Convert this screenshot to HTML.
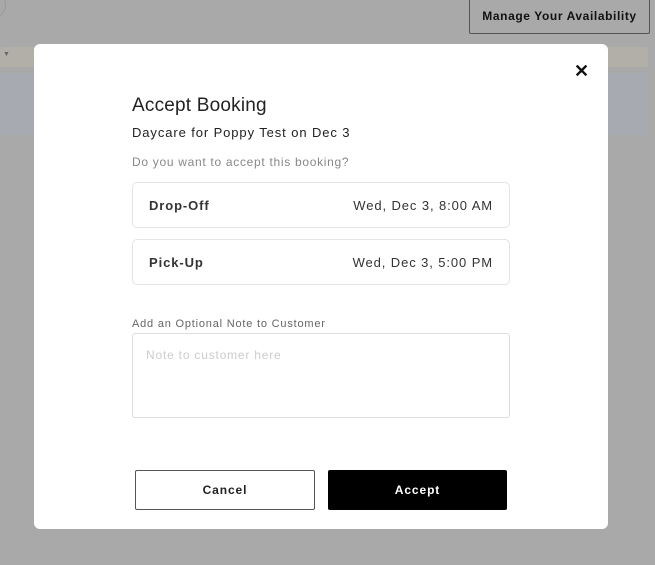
<!DOCTYPE html>
<html><head><style>
*{box-sizing:border-box;margin:0;padding:0}
body{width:655px;height:565px;background:#a9a9a9;font-family:"Liberation Sans",sans-serif;position:relative;overflow:hidden;color:#222}
.abs{position:absolute}
.modal{left:34px;top:44px;width:574px;height:485px;background:#fff;border-radius:6px}
.card{position:absolute;left:98px;width:378px;height:46px;border:1px solid #e4e4e4;border-radius:5px;font-size:13px;letter-spacing:.9px}
.card .l{position:absolute;left:16px;top:15px;font-weight:bold;color:#333}
.card .r{position:absolute;right:16px;top:15px;color:#333}
</style></head><body>
<div class="abs" style="left:-20px;top:-8px;width:26px;height:26px;border:1px solid #999;border-radius:50%"></div>
<div class="abs" style="left:469px;top:-4px;width:181px;height:38px;border:1px solid #555;border-radius:2px;font-size:12px;font-weight:bold;color:#111;text-align:center;line-height:38px;letter-spacing:.6px">Manage Your Availability</div>
<div class="abs" style="left:0;top:47px;width:648px;height:20px;background:#b1afa8;border-radius:3px"></div>
<div class="abs" style="left:3px;top:51px;font-size:7px;color:#666">▼</div>
<div class="abs" style="left:0;top:73px;width:648px;height:62px;background:#a7aab1;border-radius:4px"></div>
<div class="abs modal">
  <div class="abs" style="left:540px;top:17px;font-size:18px;font-weight:bold;color:#111">✕</div>
  <div class="abs" style="left:98px;top:51px;font-size:19px;color:#222;letter-spacing:.2px">Accept Booking</div>
  <div class="abs" style="left:98px;top:81px;font-size:13px;color:#222;letter-spacing:.9px">Daycare for Poppy Test on Dec 3</div>
  <div class="abs" style="left:98px;top:111px;font-size:12px;color:#888;letter-spacing:.7px">Do you want to accept this booking?</div>
  <div class="card" style="top:138px"><span class="l">Drop-Off</span><span class="r">Wed, Dec 3, 8:00 AM</span></div>
  <div class="card" style="top:195px"><span class="l">Pick-Up</span><span class="r">Wed, Dec 3, 5:00 PM</span></div>
  <div class="abs" style="left:98px;top:274px;font-size:11px;color:#666;letter-spacing:.8px">Add an Optional Note to Customer</div>
  <div class="abs" style="left:98px;top:289px;width:378px;height:85px;border:1px solid #ddd;border-radius:3px">
    <div class="abs" style="left:13px;top:14px;font-size:12px;color:#ccc;letter-spacing:.8px">Note to customer here</div>
  </div>
  <div class="abs" style="left:101px;top:426px;width:180px;height:40px;border:1px solid #555;border-radius:2px;text-align:center;line-height:38px;font-size:12px;font-weight:bold;color:#222;letter-spacing:.9px">Cancel</div>
  <div class="abs" style="left:294px;top:426px;width:179px;height:40px;background:#000;border-radius:2px;text-align:center;line-height:40px;font-size:12px;font-weight:bold;color:#fff;letter-spacing:.9px">Accept</div>
</div>
</body></html>
